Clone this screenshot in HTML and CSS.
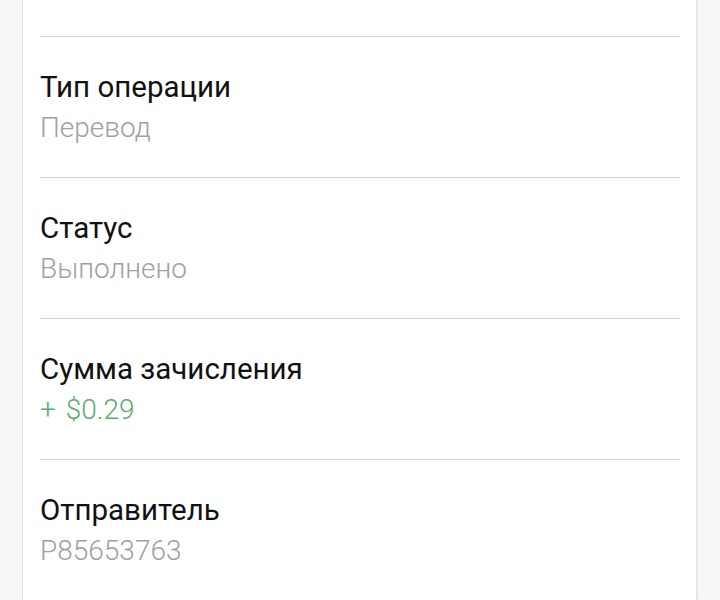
FILE: index.html
```html
<!DOCTYPE html>
<html>
	<head>
		<title>Детали операции</title>
		<meta charset="utf-8"/>
		<meta name="viewport" content="width=device-width, initial-scale=1"/>
		<link rel="stylesheet" href="styles.css">
	</head>
	<body>
		<div class="card">
			<ul class="details">
				<li class="row">
					<div class="label">Кошелёк</div>
					<div class="value">U1234567823, USD</div>
				</li>
				<li class="row">
					<div class="label">Тип операции</div>
					<div class="value">Перевод</div>
				</li>
				<li class="row">
					<div class="label">Статус</div>
					<div class="value">Выполнено</div>
				</li>
				<li class="row">
					<div class="label">Сумма зачисления</div>
					<div class="value income"><span class="sign">+</span> $0.29</div>
				</li>
				<li class="row">
					<div class="label">Отправитель</div>
					<div class="value">P85653763</div>
				</li>
			</ul>
		</div>
	</body>
</html>
```

FILE: styles.css
```css
html,
body {
	height: 100%;
}

body {
	margin: 0;
	padding: 0 24px 0 23px;
	overflow: hidden;
	background: #f7f7f7;
	font-family: Roboto, 'Noto Sans', Arial, sans-serif;
	font-weight: 300;
}

.card {
	min-height: 100%;
	background: #fff;
	padding: 0 16px 0 17px;
	box-shadow: -1px 0 1px rgba(0, 0, 0, 0.08), 1px 0 2px rgba(0, 0, 0, 0.12);
}

.details {
	list-style: none;
	margin: -104px 0 0;
	padding: 0;
}

.row {
	padding: 30px 0 29px;
	border-bottom: 1px solid #d0d0d0;
}

.label {
	font-size: 29.5px;
	line-height: 40px;
	color: #111;
	font-weight: 400;
}

.value {
	font-size: 28px;
	line-height: 41px;
	color: #a0a0a0;
}

.value.income {
	color: #5aac6c;
}

.sign {
	margin-right: 3px;
}
```
